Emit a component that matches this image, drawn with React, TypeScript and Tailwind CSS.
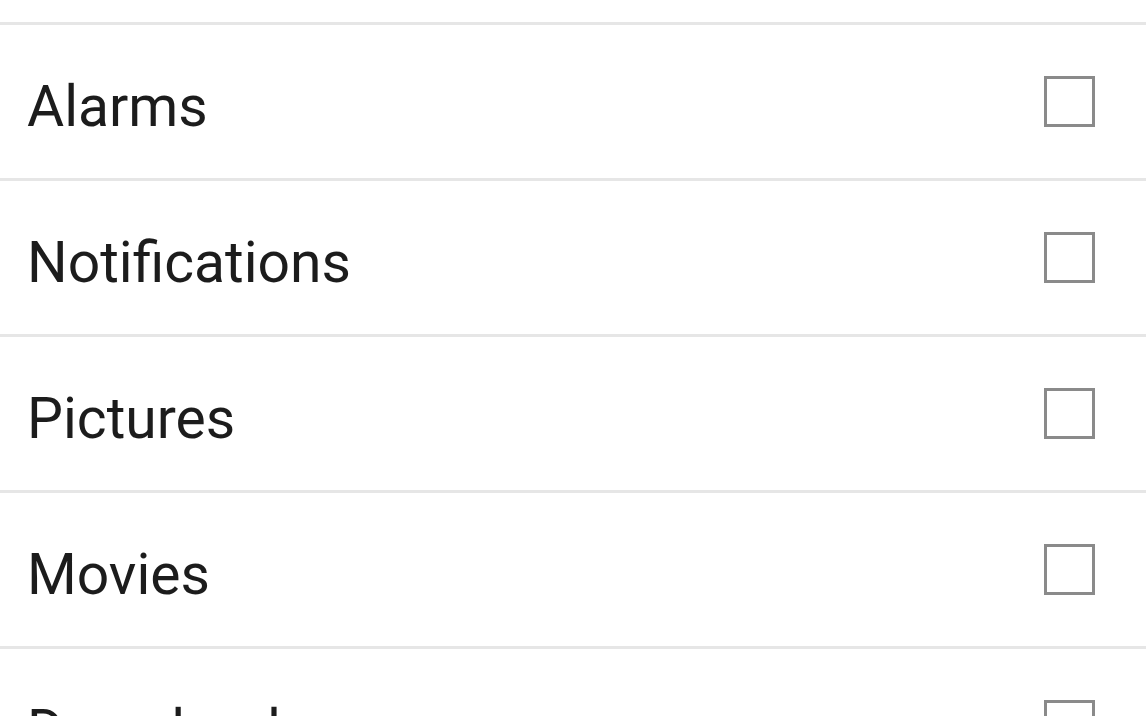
import React from "react";

const items = ["Alarms", "Notifications", "Pictures", "Movies", "Downloads"];

export default function App() {
  return (
    <div className="w-[1146px] h-[716px] overflow-hidden bg-white" style={{ fontFamily: "Roboto, 'Noto Sans', sans-serif" }}>
      <div className="h-[22px] border-b-[3px] border-[#e6e6e6] box-content" />
      {items.map((t) => (
        <div key={t} className="h-[153px] box-content border-b-[3px] border-[#e6e6e6] flex items-center justify-between pl-[27px] pr-[51px]">
          <span className="text-[57px] leading-none text-[#1c1c1c] mt-[9px]">{t}</span>
          <div className="w-[51px] h-[51px] border-[3px] border-[#8a8a8a]" />
        </div>
      ))}
    </div>
  );
}
